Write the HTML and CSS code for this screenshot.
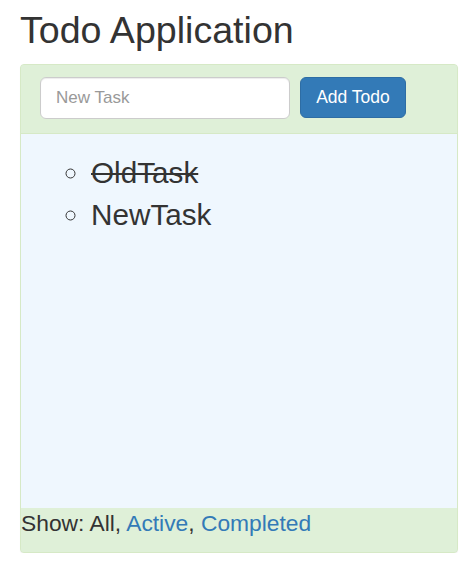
FILE: index.html
```html
<!DOCTYPE html>
<html>
<head>
<meta charset="utf-8">
<link rel="stylesheet" href="styles.css">
</head>
<body>
<div class="container">
  <h1 class="title">Todo Application</h1>
  <div class="panel">
    <div class="panel-heading">
      <input class="task-input" type="text" placeholder="New Task">
      <button class="btn-add">Add Todo</button>
    </div>
    <div class="panel-body">
      <ul class="todo-list">
        <li class="done">OldTask</li>
        <li>NewTask</li>
      </ul>
    </div>
    <div class="panel-footer">
      Show: All, <a href="#" class="link">Active</a>, <a href="#" class="link">Completed</a>
    </div>
  </div>
</div>
</body>
</html>
```

FILE: styles.css
```css
* { box-sizing: border-box; }
html, body { margin: 0; padding: 0; background: #fff; }
body {
  font-family: "Liberation Sans", Arial, sans-serif;
  color: #333;
  font-size: 14px;
  line-height: 1.428571;
}
.container {
  padding: 0 0 0 20px;
}
.title {
  margin: 11px 0 0 0;
  font-size: 37.6px;
  font-weight: 500;
  line-height: 39.6px;
  height: 53px;
}
.panel {
  width: 438px;
  border: 1px solid #d6e9c6;
  border-radius: 4px;
  box-shadow: 0 1px 1px rgba(0,0,0,.05);
  background: #dff0d8;
  overflow: hidden;
}
.panel-heading {
  display: flex;
  gap: 10px;
  padding: 12px 19px 14px;
  border-bottom: 1px solid #d6e9c6;
  background: #dff0d8;
}
.task-input {
  width: 250px;
  height: 42px;
  padding: 0 15px;
  font-family: "Liberation Sans", Arial, sans-serif;
  font-size: 17px;
  color: #555;
  background: #fff;
  border: 1px solid #ccc;
  border-radius: 6px;
  box-shadow: inset 0 1px 1px rgba(0,0,0,.075);
  outline: none;
}
.task-input::placeholder { color: #999; }
.btn-add {
  width: 106px;
  height: 41px;
  padding: 0;
  font-family: "Liberation Sans", Arial, sans-serif;
  font-size: 17.5px;
  color: #fff;
  background: #337ab7;
  border: 1px solid #2e6da4;
  border-radius: 6px;
}
.panel-body {
  height: 374px;
  background: #eff7fe;
  padding: 18px 0 0 0;
}
.todo-list {
  margin: 0;
  padding-left: 70px;
  list-style-type: circle;
  font-size: 29.7px;
  line-height: 41.5px;
}
.done { text-decoration: line-through; }
.panel-footer {
  background: #dff0d8;
  font-size: 22.8px;
  line-height: 31.4px;
  padding: 0 0 12px 0;
  height: 44px;
}
.link { color: #337ab7; text-decoration: none; }
```
